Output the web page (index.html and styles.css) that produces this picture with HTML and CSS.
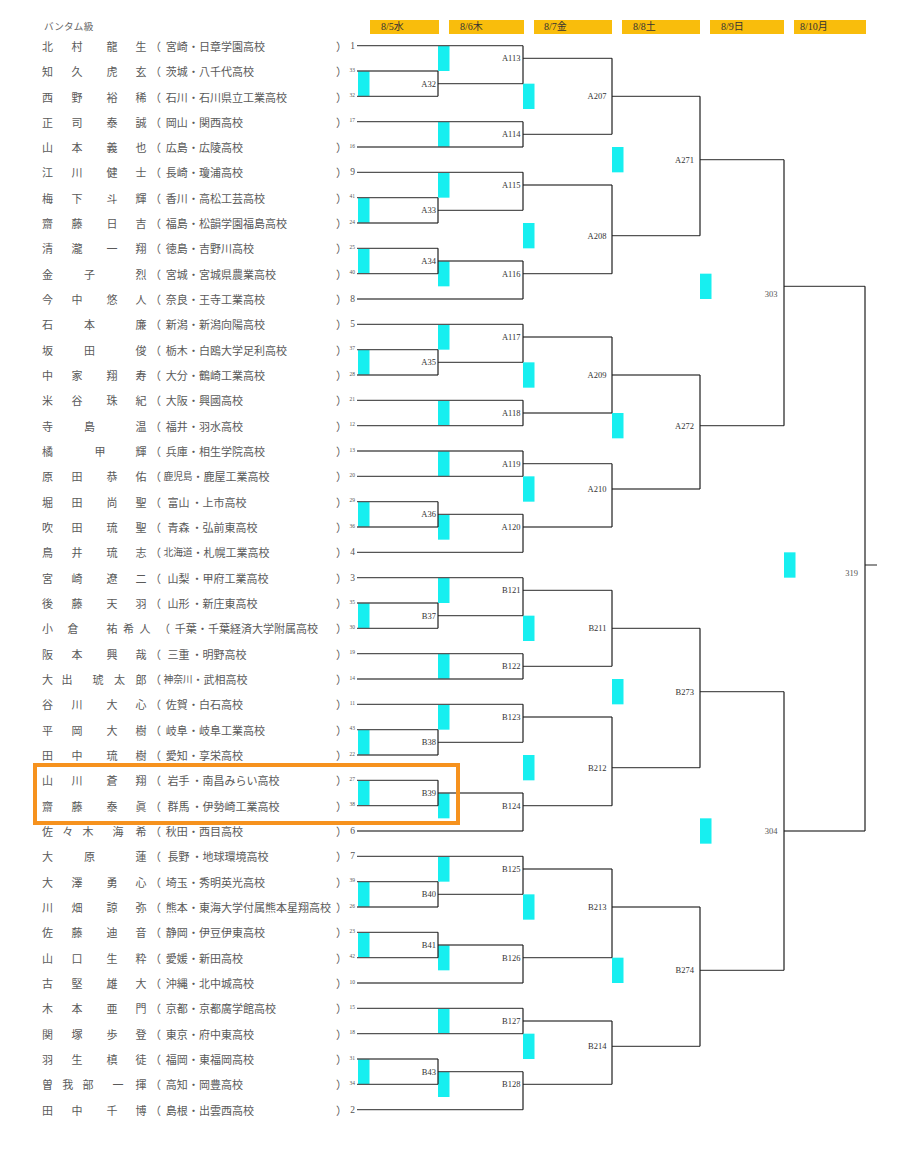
FILE: index.html
```html
<!DOCTYPE html>
<html lang="ja">
<head>
<meta charset="utf-8">
<title>バンタム級</title>
<link rel="stylesheet" href="styles.css">
</head>
<body>
<div class="page">
  <div class="head">
    <div class="title">バンタム級</div>
    <div class="days">
      <div class="day">8/5水</div>
      <div class="day">8/6木</div>
      <div class="day">8/7金</div>
      <div class="day">8/8土</div>
      <div class="day">8/9日</div>
      <div class="day">8/10月</div>
    </div>
  </div>
  <div class="main">
    <ol class="list">
      <li class="row"><span class="nm n22"><span class="fam"><i>北</i><i>村</i></span><span class="giv"><i>龍</i><i>生</i></span></span><span class="po">（</span><span class="pref">宮崎</span><span class="sch">・日章学園高校</span><span class="pc">）</span><span class="no big">1</span></li>
      <li class="row"><span class="nm n22"><span class="fam"><i>知</i><i>久</i></span><span class="giv"><i>虎</i><i>玄</i></span></span><span class="po">（</span><span class="pref">茨城</span><span class="sch">・八千代高校</span><span class="pc">）</span><span class="no">33</span></li>
      <li class="row"><span class="nm n22"><span class="fam"><i>西</i><i>野</i></span><span class="giv"><i>裕</i><i>稀</i></span></span><span class="po">（</span><span class="pref">石川</span><span class="sch">・石川県立工業高校</span><span class="pc">）</span><span class="no">32</span></li>
      <li class="row"><span class="nm n22"><span class="fam"><i>正</i><i>司</i></span><span class="giv"><i>泰</i><i>誠</i></span></span><span class="po">（</span><span class="pref">岡山</span><span class="sch">・関西高校</span><span class="pc">）</span><span class="no">17</span></li>
      <li class="row"><span class="nm n22"><span class="fam"><i>山</i><i>本</i></span><span class="giv"><i>義</i><i>也</i></span></span><span class="po">（</span><span class="pref">広島</span><span class="sch">・広陵高校</span><span class="pc">）</span><span class="no">16</span></li>
      <li class="row"><span class="nm n22"><span class="fam"><i>江</i><i>川</i></span><span class="giv"><i>健</i><i>士</i></span></span><span class="po">（</span><span class="pref">長崎</span><span class="sch">・瓊浦高校</span><span class="pc">）</span><span class="no big">9</span></li>
      <li class="row"><span class="nm n22"><span class="fam"><i>梅</i><i>下</i></span><span class="giv"><i>斗</i><i>輝</i></span></span><span class="po">（</span><span class="pref">香川</span><span class="sch">・高松工芸高校</span><span class="pc">）</span><span class="no">41</span></li>
      <li class="row"><span class="nm n22"><span class="fam"><i>齋</i><i>藤</i></span><span class="giv"><i>日</i><i>吉</i></span></span><span class="po">（</span><span class="pref">福島</span><span class="sch">・松韻学園福島高校</span><span class="pc">）</span><span class="no">24</span></li>
      <li class="row"><span class="nm n22"><span class="fam"><i>清</i><i>瀧</i></span><span class="giv"><i>一</i><i>翔</i></span></span><span class="po">（</span><span class="pref">徳島</span><span class="sch">・吉野川高校</span><span class="pc">）</span><span class="no">25</span></li>
      <li class="row"><span class="nm n21"><span class="fam"><i>金</i><i>子</i></span><span class="giv"><i>烈</i></span></span><span class="po">（</span><span class="pref">宮城</span><span class="sch">・宮城県農業高校</span><span class="pc">）</span><span class="no">40</span></li>
      <li class="row"><span class="nm n22"><span class="fam"><i>今</i><i>中</i></span><span class="giv"><i>悠</i><i>人</i></span></span><span class="po">（</span><span class="pref">奈良</span><span class="sch">・王寺工業高校</span><span class="pc">）</span><span class="no big">8</span></li>
      <li class="row"><span class="nm n21"><span class="fam"><i>石</i><i>本</i></span><span class="giv"><i>廉</i></span></span><span class="po">（</span><span class="pref">新潟</span><span class="sch">・新潟向陽高校</span><span class="pc">）</span><span class="no big">5</span></li>
      <li class="row"><span class="nm n21"><span class="fam"><i>坂</i><i>田</i></span><span class="giv"><i>俊</i></span></span><span class="po">（</span><span class="pref">栃木</span><span class="sch">・白鴎大学足利高校</span><span class="pc">）</span><span class="no">37</span></li>
      <li class="row"><span class="nm n22"><span class="fam"><i>中</i><i>家</i></span><span class="giv"><i>翔</i><i>寿</i></span></span><span class="po">（</span><span class="pref">大分</span><span class="sch">・鶴崎工業高校</span><span class="pc">）</span><span class="no">28</span></li>
      <li class="row"><span class="nm n22"><span class="fam"><i>米</i><i>谷</i></span><span class="giv"><i>珠</i><i>紀</i></span></span><span class="po">（</span><span class="pref">大阪</span><span class="sch">・興國高校</span><span class="pc">）</span><span class="no">21</span></li>
      <li class="row"><span class="nm n21"><span class="fam"><i>寺</i><i>島</i></span><span class="giv"><i>温</i></span></span><span class="po">（</span><span class="pref">福井</span><span class="sch">・羽水高校</span><span class="pc">）</span><span class="no">12</span></li>
      <li class="row"><span class="nm n12"><span class="fam"><i>橘</i></span><span class="giv"><i>甲</i><i>輝</i></span></span><span class="po">（</span><span class="pref">兵庫</span><span class="sch">・相生学院高校</span><span class="pc">）</span><span class="no">13</span></li>
      <li class="row"><span class="nm n22"><span class="fam"><i>原</i><i>田</i></span><span class="giv"><i>恭</i><i>佑</i></span></span><span class="po">（</span><span class="pref w p3">鹿児島</span><span class="sch">・鹿屋工業高校</span><span class="pc">）</span><span class="no">20</span></li>
      <li class="row"><span class="nm n22"><span class="fam"><i>堀</i><i>田</i></span><span class="giv"><i>尚</i><i>聖</i></span></span><span class="po">（</span><span class="pref w">富山</span><span class="sch">・上市高校</span><span class="pc">）</span><span class="no">29</span></li>
      <li class="row"><span class="nm n22"><span class="fam"><i>吹</i><i>田</i></span><span class="giv"><i>琉</i><i>聖</i></span></span><span class="po">（</span><span class="pref w">青森</span><span class="sch">・弘前東高校</span><span class="pc">）</span><span class="no">36</span></li>
      <li class="row"><span class="nm n22"><span class="fam"><i>鳥</i><i>井</i></span><span class="giv"><i>琉</i><i>志</i></span></span><span class="po">（</span><span class="pref w p3">北海道</span><span class="sch">・札幌工業高校</span><span class="pc">）</span><span class="no big">4</span></li>
      <li class="row"><span class="nm n22"><span class="fam"><i>宮</i><i>崎</i></span><span class="giv"><i>遼</i><i>二</i></span></span><span class="po">（</span><span class="pref w">山梨</span><span class="sch">・甲府工業高校</span><span class="pc">）</span><span class="no big">3</span></li>
      <li class="row"><span class="nm n22"><span class="fam"><i>後</i><i>藤</i></span><span class="giv"><i>天</i><i>羽</i></span></span><span class="po">（</span><span class="pref w">山形</span><span class="sch">・新庄東高校</span><span class="pc">）</span><span class="no">35</span></li>
      <li class="row"><span class="nm n23w"><span class="fam"><i>小</i><i>倉</i></span><span class="giv"><i>祐</i><i>希</i><i>人</i></span></span><span class="po">（</span><span class="pref">千葉</span><span class="sch">・千葉経済大学附属高校</span><span class="pc">）</span><span class="no">30</span></li>
      <li class="row"><span class="nm n22"><span class="fam"><i>阪</i><i>本</i></span><span class="giv"><i>興</i><i>哉</i></span></span><span class="po">（</span><span class="pref w">三重</span><span class="sch">・明野高校</span><span class="pc">）</span><span class="no">19</span></li>
      <li class="row"><span class="nm n23"><span class="fam"><i>大</i><i>出</i></span><span class="giv"><i>琥</i><i>太</i><i>郎</i></span></span><span class="po">（</span><span class="pref w p3">神奈川</span><span class="sch">・武相高校</span><span class="pc">）</span><span class="no">14</span></li>
      <li class="row"><span class="nm n22"><span class="fam"><i>谷</i><i>川</i></span><span class="giv"><i>大</i><i>心</i></span></span><span class="po">（</span><span class="pref">佐賀</span><span class="sch">・白石高校</span><span class="pc">）</span><span class="no">11</span></li>
      <li class="row"><span class="nm n22"><span class="fam"><i>平</i><i>岡</i></span><span class="giv"><i>大</i><i>樹</i></span></span><span class="po">（</span><span class="pref">岐阜</span><span class="sch">・岐阜工業高校</span><span class="pc">）</span><span class="no">43</span></li>
      <li class="row"><span class="nm n22"><span class="fam"><i>田</i><i>中</i></span><span class="giv"><i>琉</i><i>樹</i></span></span><span class="po">（</span><span class="pref">愛知</span><span class="sch">・享栄高校</span><span class="pc">）</span><span class="no">22</span></li>
      <li class="row"><span class="nm n22"><span class="fam"><i>山</i><i>川</i></span><span class="giv"><i>蒼</i><i>翔</i></span></span><span class="po">（</span><span class="pref w">岩手</span><span class="sch">・南昌みらい高校</span><span class="pc">）</span><span class="no">27</span></li>
      <li class="row"><span class="nm n22"><span class="fam"><i>齋</i><i>藤</i></span><span class="giv"><i>泰</i><i>眞</i></span></span><span class="po">（</span><span class="pref w">群馬</span><span class="sch">・伊勢崎工業高校</span><span class="pc">）</span><span class="no">38</span></li>
      <li class="row"><span class="nm n32"><span class="fam"><i>佐</i><i>々</i><i>木</i></span><span class="giv"><i>海</i><i>希</i></span></span><span class="po">（</span><span class="pref">秋田</span><span class="sch">・西目高校</span><span class="pc">）</span><span class="no big">6</span></li>
      <li class="row"><span class="nm n21"><span class="fam"><i>大</i><i>原</i></span><span class="giv"><i>蓮</i></span></span><span class="po">（</span><span class="pref w">長野</span><span class="sch">・地球環境高校</span><span class="pc">）</span><span class="no big">7</span></li>
      <li class="row"><span class="nm n22"><span class="fam"><i>大</i><i>澤</i></span><span class="giv"><i>勇</i><i>心</i></span></span><span class="po">（</span><span class="pref">埼玉</span><span class="sch">・秀明英光高校</span><span class="pc">）</span><span class="no">39</span></li>
      <li class="row"><span class="nm n22"><span class="fam"><i>川</i><i>畑</i></span><span class="giv"><i>諒</i><i>弥</i></span></span><span class="po">（</span><span class="pref">熊本</span><span class="sch">・東海大学付属熊本星翔高校</span><span class="pc">）</span><span class="no">26</span></li>
      <li class="row"><span class="nm n22"><span class="fam"><i>佐</i><i>藤</i></span><span class="giv"><i>迪</i><i>音</i></span></span><span class="po">（</span><span class="pref">静岡</span><span class="sch">・伊豆伊東高校</span><span class="pc">）</span><span class="no">23</span></li>
      <li class="row"><span class="nm n22"><span class="fam"><i>山</i><i>口</i></span><span class="giv"><i>生</i><i>粋</i></span></span><span class="po">（</span><span class="pref">愛媛</span><span class="sch">・新田高校</span><span class="pc">）</span><span class="no">42</span></li>
      <li class="row"><span class="nm n22"><span class="fam"><i>古</i><i>堅</i></span><span class="giv"><i>雄</i><i>大</i></span></span><span class="po">（</span><span class="pref">沖縄</span><span class="sch">・北中城高校</span><span class="pc">）</span><span class="no">10</span></li>
      <li class="row"><span class="nm n22"><span class="fam"><i>木</i><i>本</i></span><span class="giv"><i>亜</i><i>門</i></span></span><span class="po">（</span><span class="pref">京都</span><span class="sch">・京都廣学館高校</span><span class="pc">）</span><span class="no">15</span></li>
      <li class="row"><span class="nm n22"><span class="fam"><i>関</i><i>塚</i></span><span class="giv"><i>歩</i><i>登</i></span></span><span class="po">（</span><span class="pref">東京</span><span class="sch">・府中東高校</span><span class="pc">）</span><span class="no">18</span></li>
      <li class="row"><span class="nm n22"><span class="fam"><i>羽</i><i>生</i></span><span class="giv"><i>槙</i><i>徒</i></span></span><span class="po">（</span><span class="pref">福岡</span><span class="sch">・東福岡高校</span><span class="pc">）</span><span class="no">31</span></li>
      <li class="row"><span class="nm n32"><span class="fam"><i>曽</i><i>我</i><i>部</i></span><span class="giv"><i>一</i><i>揮</i></span></span><span class="po">（</span><span class="pref">高知</span><span class="sch">・岡豊高校</span><span class="pc">）</span><span class="no">34</span></li>
      <li class="row"><span class="nm n22"><span class="fam"><i>田</i><i>中</i></span><span class="giv"><i>千</i><i>博</i></span></span><span class="po">（</span><span class="pref">島根</span><span class="sch">・出雲西高校</span><span class="pc">）</span><span class="no big">2</span></li>
    </ol>
    <svg id="bracket" class="bracket" width="551" height="1100" viewBox="356 33.333 551 1100" xmlns="http://www.w3.org/2000/svg"></svg>
  </div>
  <div class="hilite"></div>
</div>
<script src="script.js"></script>
</body>
</html>
```
FILE: styles.css
```css
html, body {
  margin: 0;
  padding: 0;
  background: #fff;
}
.page {
  position: relative;
  width: 907px;
  height: 1158px;
  padding-top: 20px;
  box-sizing: border-box;
  font-family: "Noto Sans CJK JP", "Liberation Serif", serif;
  color: #5a5a5a;
  overflow: hidden;
}
.head {
  display: flex;
  height: 13.333px;
  padding-left: 44px;
}
.title {
  width: 326px;
  font-size: 9.6px;
  line-height: 13px;
  color: #666;
  letter-spacing: 0.2px;
}
.days {
  display: flex;
  gap: 10px;
}
.day {
  height: 14px;
  background: #f9bd0c;
  font-family: "Liberation Serif", "Noto Sans CJK JP", serif;
  font-size: 10px;
  line-height: 14px;
  color: #333;
  padding-left: 11px;
  box-sizing: border-box;
}
.day:nth-child(1) { width: 69px; }
.day:nth-child(2) { width: 75px; }
.day:nth-child(3) { width: 78px; padding-left: 10px; }
.day:nth-child(4) { width: 78px; }
.day:nth-child(5) { width: 74px; }
.day:nth-child(6) { width: 72px; padding-left: 6px; }

.main {
  display: flex;
  align-items: flex-start;
}
.list {
  list-style: none;
  margin: 0;
  padding: 0;
  width: 356px;
  flex: none;
}
.row {
  display: flex;
  align-items: center;
  height: 25.333px;
  padding-left: 42px;
  box-sizing: border-box;
  font-size: 11px;
  line-height: 1.3;
  white-space: nowrap;
}
.nm {
  display: flex;
  justify-content: space-between;
  width: 104.5px;
  margin-right: 3.5px;
  flex: none;
}
.fam, .giv {
  display: flex;
  justify-content: space-between;
}
.nm i {
  font-style: normal;
  width: 11px;
  text-align: center;
}
.n22 .fam { width: 40.5px; }
.n22 .giv { width: 40px; }
.n21 .fam { width: 53px; }
.n12 .giv { width: 52px; }
.n32 .fam { width: 51.5px; }
.n32 .giv { width: 34px; }
.n23 .fam { width: 30.5px; }
.n23 .giv { width: 54px; }
.n23w { width: 108.5px; margin-right: 8.5px; }
.n23w .fam { width: 36.5px; }
.n23w .giv { width: 44px; }

.po, .pc {
  width: 11px;
  flex: none;
}
.pref {
  flex: none;
  width: 22.5px;
  margin-left: 4.5px;
  text-align: center;
}
.pref.w { width: 26px; }
.pref.p3 {
  width: 29px;
  margin-left: 2.5px;
  font-size: 9.8px;
  letter-spacing: -0.2px;
}
.sch {
  flex: 1;
  min-width: 0;
}
.no {
  flex: none;
  width: 9px;
  padding-right: 1px;
  box-sizing: border-box;
  text-align: right;
  font-family: "Liberation Serif", serif;
  font-size: 5.5px;
  color: #555;
  transform: translateY(-1.5px);
}
.no.big {
  font-size: 9.5px;
  transform: none;
}

.bracket {
  flex: none;
  display: block;
  overflow: visible;
}
.bracket .cy rect { fill: #17eff0; }
.bracket .hz line { stroke: #555; stroke-width: 1.3; }
.bracket .vt line { stroke: #1e1e1e; stroke-width: 1.2; }
.bracket text {
  font-family: "Liberation Serif", serif;
  font-size: 8.5px;
  fill: #333;
  text-anchor: end;
}
.bracket text.lt { fill: #555; }

.hilite {
  position: absolute;
  left: 33px;
  top: 763px;
  width: 427px;
  height: 62px;
  border: 4px solid #f6921e;
  box-sizing: border-box;
}
```
FILE: script.js
```js
(function () {
  var NS = 'http://www.w3.org/2000/svg';
  var svg = document.getElementById('bracket');
  var X = [357, 438, 523, 612, 700, 784, 865];
  var gap = [0, 2, 2.5, 5.5, 6, 6.5, 7];
  function Y(k) { return 46 + (k - 1) * 76 / 3; }
  var R1 = [2,3,7,8,9,10,13,14,19,20,23,24,28,29,30,31,34,35,36,37,41,42];
  var M = [
    ['A32',1,2,3,2.5],['A33',1,7,8,7.5],['A34',1,9,10,9.5],['A35',1,13,14,13.5],
    ['A36',1,19,20,19.5],['B37',1,23,24,23.5],['B38',1,28,29,28.5],['B39',1,30,31,30.5],
    ['B40',1,34,35,34.5],['B41',1,36,37,36.5],['B43',1,41,42,41.5],
    ['A113',2,1,2.5,1.5],['A114',2,4,5,4.5],['A115',2,6,7.5,6.5],['A116',2,9.5,11,10],
    ['A117',2,12,13.5,12.5],['A118',2,15,16,15.5],['A119',2,17,18,17.5],['A120',2,19.5,21,20],
    ['B121',2,22,23.5,22.5],['B122',2,25,26,25.5],['B123',2,27,28.5,27.5],['B124',2,30.5,32,31],
    ['B125',2,33,34.5,33.5],['B126',2,36.5,38,37],['B127',2,39,40,39.5],['B128',2,41.5,43,42],
    ['A207',3,1.5,4.5,3],['A208',3,6.5,10,8.5],['A209',3,12.5,15.5,14],['A210',3,17.5,20,18.5],
    ['B211',3,22.5,25.5,24],['B212',3,27.5,31,29.5],['B213',3,33.5,37,35],['B214',3,39.5,42,40.5],
    ['A271',4,3,8.5,5.5],['A272',4,14,18.5,16],['B273',4,24,29.5,26.5],['B274',4,35,40.5,37.5],
    ['303',5,5.5,16,10.5,8],['304',5,26.5,37.5,32,0],
    ['319',6,10.5,32,21.5,8]
  ];
  function el(tag, attrs, parent, text) {
    var e = document.createElementNS(NS, tag);
    for (var a in attrs) e.setAttribute(a, attrs[a]);
    if (text) e.textContent = text;
    parent.appendChild(e);
    return e;
  }
  var gC = el('g', {'class': 'cy'}, svg);
  var gH = el('g', {'class': 'hz'}, svg);
  var gV = el('g', {'class': 'vt'}, svg);
  var gT = el('g', {'class': 'lb'}, svg);
  for (var k = 1; k <= 43; k++) {
    var end = R1.indexOf(k) >= 0 ? X[1] : X[2];
    el('line', {x1: X[0], y1: Y(k), x2: end, y2: Y(k)}, gH);
  }
  M.forEach(function (m) {
    var c = m[1], yo = Y(m[4]);
    var cx = c === 1 ? X[0] + 1 : X[c - 1];
    el('rect', {x: cx, y: yo - 38 / 3, width: 11.5, height: 76 / 3}, gC);
    el('line', {x1: X[c], y1: Y(m[2]), x2: X[c], y2: Y(m[3])}, gV);
    el('line', {x1: X[c], y1: yo, x2: c === 6 ? 877 : X[c + 1], y2: yo}, gH);
    var attrs = {x: X[c] - gap[c], y: yo + 3 + (m[5] || 0)};
    if (c >= 5) attrs['class'] = 'lt';
    el('text', attrs, gT, m[0]);
  });
})();
```
